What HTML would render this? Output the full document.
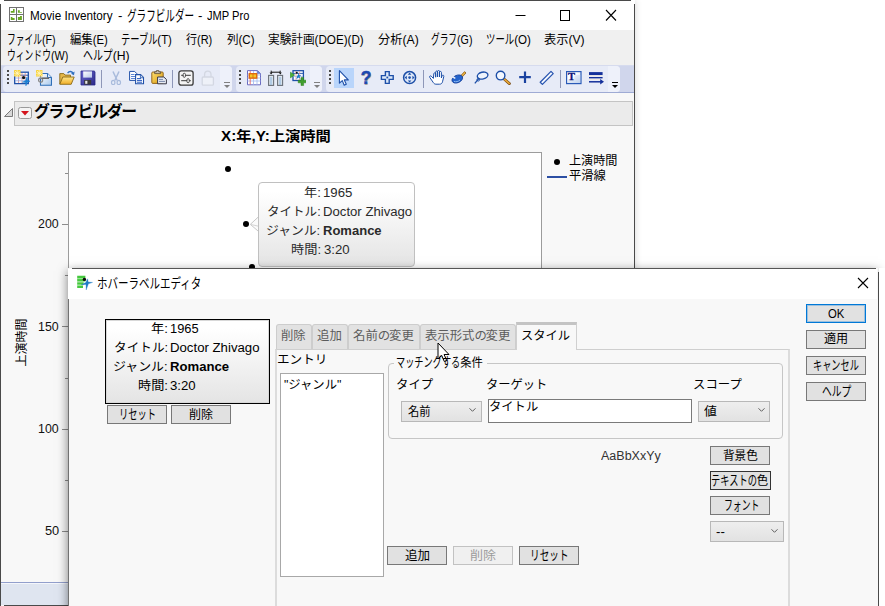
<!DOCTYPE html>
<html lang="ja">
<head>
<meta charset="utf-8">
<title>Movie Inventory - グラフビルダー - JMP Pro</title>
<style>
*{box-sizing:border-box;margin:0;padding:0}
html,body{width:885px;height:606px;overflow:hidden;background:#fff}
body{position:relative;font-family:"Liberation Sans","Noto Sans CJK JP",sans-serif;font-size:12px;color:#000}
.a{position:absolute;white-space:nowrap}
.t{position:absolute;white-space:pre;transform-origin:0 50%;line-height:20px;height:20px}
#main{left:0;top:0;width:635px;height:606px;background:#f8f8f8;overflow:hidden;box-shadow:0 0 7px rgba(0,0,0,.16)}
#titlebar{left:0;top:0;width:635px;height:30px;background:#fff}
#menubar{left:1px;top:30px;width:633px;height:35px;background:#f0f0f0}
#toolbar{left:1px;top:65px;width:633px;height:28px;background:#d0d6ec;border-bottom:1px solid #9fabd4;border-top:1px solid #d6dbee}
.tg{position:absolute;top:0px;height:26px;background:#e7ebf7;border-radius:4px}
.ov{position:absolute;top:0;right:0;width:12px;height:26px;background:#eef1fa;border-radius:0 4px 4px 0}
.grip{position:absolute;top:4px;width:2px;height:14px;background:repeating-linear-gradient(#4a4a4a 0 2px,transparent 2px 4px)}
.sep{position:absolute;top:4px;width:1px;height:18px;background:#8e97b8}
.ic{position:absolute;top:4px;width:16px;height:16px}
#olhead{left:14px;top:101px;width:619px;height:25px;background:#ebebeb;border:1px solid #c4c4c4}
#plot{left:68px;top:152px;width:474px;height:460px;background:#fff;border:1px solid #9c9c9c}
.tick{position:absolute;height:1px;background:#8c8c8c}
.pt{position:absolute;width:6px;height:6px;border-radius:50%;background:#000}
#tip{left:258px;top:182px;width:157px;height:85px;border:1px solid #c0c0c0;border-radius:4px;background:linear-gradient(#ffffff 10%,#e4e4e4)}
#dlg{left:68px;top:268px;width:810px;height:345px;background:#f8f8f8;box-shadow:0 3px 10px rgba(0,0,0,.5)}
#dtitle{left:0;top:1px;width:809px;height:30px;background:#fff}
.btn{position:absolute;height:19px;background:#e1e1e1;border:1px solid #787878;text-align:center;white-space:nowrap}
.tab{position:absolute;top:324px;height:25px;background:#e2e2e2;border:1px solid #cdcdcd;border-bottom:none;border-radius:3px 3px 0 0}
.sel{position:absolute;height:21px;background:linear-gradient(#eeeeee,#e2e2e2);border:1px solid #b8b8b8}
</style>
</head>
<body>

<div id="main" class="a">
<div id="titlebar" class="a"></div>
<div class="a" style="left:4px;top:0;width:627px;height:1px;background:#4a4a4a"></div>
<div class="a" style="left:0;top:4px;width:1px;height:602px;background:#4a4a4a"></div>
<div class="a" style="left:634px;top:4px;width:1px;height:602px;background:#4a4a4a"></div>
<!-- app icon -->
<svg class="a" style="left:9px;top:7px" width="16" height="16" viewBox="0 0 16 16">
<rect x="0.5" y="0.5" width="14" height="14" fill="#fff" stroke="#717171"/>
<path d="M7.5 0.5V14.5M0.5 7.5H14.5" stroke="#717171" fill="none"/>
<path d="M1.8 5.8V4h2.200V2h1.600v3.800zM8.900 5.800V3.200h1.900V5h2.100v.8zM1.800 12.900V10.100h1.600V11h2.200v1.900zM8.900 12.900V10h2.100V9.100h1.900v3.800z" fill="#6aa823"/>
</svg>
<!-- window controls -->
<svg class="a" style="left:505px;top:1px" width="129" height="29" viewBox="0 0 129 29">
<path d="M10.5 14.5h10" stroke="#000" stroke-width="1" fill="none"/>
<rect x="55.5" y="9.5" width="9" height="10" fill="none" stroke="#000" stroke-width="1"/>
<path d="M101 9l10 10.5M111 9l-10 10.5" stroke="#000" stroke-width="1.1" fill="none"/>
</svg>
<div id="menubar" class="a"></div>
<div id="toolbar" class="a">
  <div class="tg" style="left:2px;width:229px"><div class="ov"></div></div>
  <div class="tg" style="left:235px;width:86px"><div class="ov"></div></div>
  <div class="tg" style="left:325px;width:294px"><div class="ov"></div></div>
  <div class="grip" style="left:6px"></div>
  <div class="grip" style="left:238px"></div>
  <div class="grip" style="left:328px"></div>
  <div class="sep" style="left:100px"></div>
  <div class="sep" style="left:171px"></div>
  <div class="sep" style="left:422px"></div>
  <div class="sep" style="left:559px"></div>
  <div class="a" style="left:333px;top:2px;width:20px;height:20px;background:#b9d5fb"></div>
  <!-- overflow arrows -->
  <svg class="a" style="left:222px;top:15px" width="8" height="8" viewBox="0 0 8 8"><path d="M1 1.5h6" stroke="#808080"/><path d="M1 4h6l-3 3z" fill="#808080"/></svg>
  <svg class="a" style="left:312px;top:15px" width="8" height="8" viewBox="0 0 8 8"><path d="M1 1.5h6" stroke="#808080"/><path d="M1 4h6l-3 3z" fill="#808080"/></svg>
  <svg class="a" style="left:610px;top:15px" width="8" height="8" viewBox="0 0 8 8"><path d="M1 1.5h6" stroke="#000"/><path d="M1 4h6l-3 3z" fill="#000"/></svg>
  <svg class="a" style="left:13px;top:4px" width="16" height="16" viewBox="0 0 16 16"><rect x="0.7" y="2.2" width="13.6" height="11.4" fill="#fff" stroke="#1d4fa8" stroke-width="1.3"/><path d="M1 5.2h13" stroke="#1d4fa8" stroke-width="1"/><path d="M4.5 3v10M8 3v10M11.2 3v10" stroke="#e08a8a" stroke-width=".8"/><path d="M1 8h13M1 10.8h13" stroke="#8aa4e0" stroke-width=".8"/><rect x="0" y="0" width="6.5" height="6.5" fill="#f7d23c"/><path d="M3.2 0v6.5M0 3.2h6.5M.8 .8l5 5M5.8 .8l-5 5" stroke="#fff6c8" stroke-width=".8"/><circle cx="9.6" cy="7.6" r="1.6" fill="#111"/><path d="M13 6.800L13.700 10.500L16.300 11.100L13.500 12.300L11.900 16L11.500 12.600L8.200 12.200L11.600 10.600z" fill="#1a80d4" stroke="#1a80d4" stroke-width=".4"/></svg>
<svg class="a" style="left:35px;top:4px" width="16" height="16" viewBox="0 0 16 16"><defs><linearGradient id="g2" x1="0" y1="0" x2="1" y2="1"><stop offset="0" stop-color="#fff"/><stop offset="1" stop-color="#a8c8ec"/></linearGradient></defs><path d="M4.5 3.5h7l4 4v7.8h-11z" fill="url(#g2)" stroke="#2f6fb8" stroke-width="1.1"/><path d="M11.5 3.5v4h4" fill="#dbe9f8" stroke="#2f6fb8" stroke-width="1"/><rect x="0" y="0" width="6.5" height="6.5" fill="#f7d23c"/><path d="M3.2 0v6.5M0 3.2h6.5M.8 .8l5 5M5.8 .8l-5 5" stroke="#fff6c8" stroke-width=".8"/><circle cx="4.6" cy="10.2" r="2" fill="none" stroke="#8a8a8a" stroke-width="1.3"/><path d="M5.5 8.2h7.5" stroke="#6a6a6a" stroke-width="1.6"/><path d="M4.4 6v2.5" stroke="#9a9a9a" stroke-width="1"/></svg>
<svg class="a" style="left:58px;top:4px" width="16" height="16" viewBox="0 0 16 16"><defs><linearGradient id="g3" x1="0" y1="0" x2="0" y2="1"><stop offset="0" stop-color="#ffe68a"/><stop offset="1" stop-color="#f0ae28"/></linearGradient></defs><path d="M.8 14V3.6h4l1.3 1.5h5.4V7" fill="#e6b84a" stroke="#8a6a18" stroke-width=".9"/><path d="M.8 14.3L3.8 7h11.4l-3 7.3z" fill="url(#g3)" stroke="#8a6a18" stroke-width=".9"/><path d="M8.6 3.2c1.6-2.4 4.6-2.2 5.4.2" fill="none" stroke="#2f6fc0" stroke-width="1.4"/><path d="M15.6 1.6l-.6 3.6-3-1.4z" fill="#2f6fc0"/></svg>
<svg class="a" style="left:79px;top:4px" width="16" height="16" viewBox="0 0 16 16"><defs><linearGradient id="g4" x1="0" y1="0" x2="1" y2="1"><stop offset="0" stop-color="#6a68d0"/><stop offset="1" stop-color="#2a2888"/></linearGradient><linearGradient id="g4b" x1="0" y1="0" x2="1" y2="1"><stop offset="0" stop-color="#fff"/><stop offset="1" stop-color="#b8c8e8"/></linearGradient></defs><path d="M1 1h13.2l.8 .8V15H1z" fill="url(#g4)" stroke="#2a2888" stroke-width=".8"/><rect x="3.2" y="1.4" width="8.8" height="6.2" fill="url(#g4b)"/><rect x="4.2" y="10" width="7" height="4.6" fill="#3a3a3a"/><rect x="5.2" y="10.8" width="2.2" height="3" fill="#e8e8e8"/></svg>
<svg class="a" style="left:107px;top:4px" width="16" height="16" viewBox="0 0 16 16"><path d="M5 1.5l4.2 9M11 1.5l-4.2 9" stroke="#a9bbdc" stroke-width="1.5" fill="none"/><ellipse cx="5.2" cy="12.4" rx="1.7" ry="2.1" fill="#e6ecf8" stroke="#a9bbdc" stroke-width="1.2"/><ellipse cx="10.8" cy="12.4" rx="1.7" ry="2.1" fill="#e6ecf8" stroke="#a9bbdc" stroke-width="1.2"/></svg>
<svg class="a" style="left:128px;top:4px" width="16" height="16" viewBox="0 0 16 16"><path d="M.6 1.4h5l2.4 2.4v6.6H.6z" fill="#fff" stroke="#2050a8" stroke-width="1"/><path d="M2 4.5h3.5M2 6.5h4.5M2 8.5h4.5" stroke="#4a78d0" stroke-width=".9"/><path d="M6.6 4.6h5l2.9 2.9v6.3H6.6z" fill="#fff" stroke="#2050a8" stroke-width="1.1"/><path d="M11.4 4.8v3h3" fill="#c8d8f0" stroke="#2050a8" stroke-width=".8"/><path d="M8 8.6h4M8 10.4h5M8 12.2h5" stroke="#2458c0" stroke-width="1"/></svg>
<svg class="a" style="left:150px;top:4px" width="16" height="16" viewBox="0 0 16 16"><defs><linearGradient id="g7" x1="0" y1="0" x2="1" y2="1"><stop offset="0" stop-color="#ffe070"/><stop offset="1" stop-color="#d89a10"/></linearGradient></defs><rect x=".8" y="2" width="11.4" height="11.4" rx="1" fill="url(#g7)" stroke="#8a5a10" stroke-width=".9"/><path d="M3.6 3.6V1.8h1.8V.6h2.4v1.2h1.8v1.8z" fill="#c8c0b0" stroke="#5a4a30" stroke-width=".8"/><path d="M6.6 7h6.2l2.6 2.4v4.4H6.6z" fill="#e8ecf4" stroke="#3a3a48" stroke-width="1"/><path d="M8 9.4h4M8 11.4h6" stroke="#6a7aa0" stroke-width=".9"/></svg>
<svg class="a" style="left:177px;top:4px" width="16" height="16" viewBox="0 0 16 16"><rect x=".9" y=".9" width="14.2" height="14.2" rx="2.2" fill="#f4f4f4" stroke="#3a3a3a" stroke-width="1.3"/><path d="M3.2 5.3h9.6M3.2 10.7h9.6" stroke="#3a3a3a" stroke-width="1"/><rect x="5.2" y="3.3" width="2.2" height="4" rx="1" fill="#fff" stroke="#3a3a3a" stroke-width=".9"/><rect x="9" y="8.7" width="2.2" height="4" rx="1" fill="#fff" stroke="#3a3a3a" stroke-width=".9"/></svg>
<svg class="a" style="left:199px;top:4px" width="16" height="16" viewBox="0 0 16 16"><path d="M4.6 7V4.4a3.2 3.2 0 0 1 6.4 0V7" fill="none" stroke="#d3d7e2" stroke-width="1.3"/><rect x="2.2" y="7" width="11.2" height="8.2" rx="1" fill="#eef1f8" stroke="#d3d7e2" stroke-width="1.3"/></svg>
<svg class="a" style="left:245px;top:4px" width="16" height="16" viewBox="0 0 16 16"><path d="M1.5 .6h10l3 3v11.2h-13z" fill="#fff" stroke="#6a6ac0" stroke-width="1"/><path d="M1.5 5h13M1.5 8h13M1.5 11h13M7.5 1v13.5M11 1v13.5" stroke="#a8c0f0" stroke-width=".9"/><path d="M4.2 1v13.5" stroke="#e86060" stroke-width=".9"/><rect x="3.3" y="3.700" width="7.400" height="4.400" fill="#f4c828" stroke="#e06a10" stroke-width="1.400"/><path d="M7 4v4" stroke="#e06a10" stroke-width=".9"/><path d="M11.5 .8v2.8h2.8" fill="#5a8ae0" stroke="#6a6ac0" stroke-width=".6"/></svg>
<svg class="a" style="left:267px;top:4px" width="16" height="16" viewBox="0 0 16 16"><rect x=".6" y="5.4" width="5" height="10" fill="#dfe7ef" stroke="#6a7078" stroke-width="1.1"/><rect x="9.6" y="5.4" width="5" height="10" fill="#dfe7ef" stroke="#6a7078" stroke-width="1.1"/><path d="M2 8h2.2M2 10h2.2M2 12h2.2M2 14h2.2M11 8h2.2M11 10h2.2M11 12h2.2M11 14h2.2" stroke="#7aa8d8" stroke-width=".9"/><path d="M3 2.2h9.4" stroke="#111" stroke-width="1"/><path d="M1.6 2.4h3l-1.5 2.2zM10.8 2.4h3l-1.5 2.2z" fill="#111"/><path d="M3.2 .6v2M12.2 .6v2" stroke="#111" stroke-width=".9"/></svg>
<svg class="a" style="left:289px;top:4px" width="16" height="16" viewBox="0 0 16 16"><rect x="3" y=".7" width="10.4" height="9.8" fill="#fff" stroke="#1d4fa8" stroke-width="1.3"/><path d="M3 3.4h10" stroke="#1d4fa8" stroke-width=".9"/><path d="M6 1v9M9.6 1v9" stroke="#e89090" stroke-width=".7"/><path d="M3 6.4h10" stroke="#90a8e0" stroke-width=".7"/><path d="M8.6 3.2l.5 2 2.4-.4-2 1.6 1 2.4-2-1.4-2.2 1.8.8-2.6z" fill="#1878c8"/><circle cx="6.8" cy="2.8" r="1" fill="#111"/><path d="M.4 2.2L4.6 5 .4 7.8z" fill="#4db03c" stroke="#2f8a24" stroke-width=".6"/><path d="M11 7.4h2.6v2.8h2.8v2.6h-2.8v2.8H11v-2.8H8.2v-2.6H11z" fill="#3e9e2c" stroke="#2a7a1c" stroke-width=".5"/></svg>
<svg class="a" style="left:335px;top:4px" width="16" height="16" viewBox="0 0 16 16"><path d="M3.4 .6v12.6l2.9-2.6 1.9 4.6 2.1-.9-2-4.4h4z" fill="#fff" stroke="#1d4fa8" stroke-width="1.1" stroke-linejoin="round"/></svg>
<svg class="a" style="left:357px;top:4px" width="16" height="16" viewBox="0 0 16 16"><text x="8.800" y="14.600" font-family="Liberation Sans,sans-serif" font-weight="700" font-size="17.500" text-anchor="middle" fill="#dcc098">?</text><text x="8" y="14" font-family="Liberation Sans,sans-serif" font-weight="700" font-size="17.500" text-anchor="middle" fill="#1c48b0" stroke="#1c48b0" stroke-width=".5">?</text></svg>
<svg class="a" style="left:379px;top:4px" width="16" height="16" viewBox="0 0 16 16"><path d="M5.4 1.6h3.8v4h4v3.8h-4v4H5.4v-4h-4V5.6h4z" fill="#dce8f8" stroke="#1d4fa8" stroke-width="1.4"/><rect x="6.4" y="6.6" width="1.8" height="1.8" fill="#1d4fa8"/></svg>
<svg class="a" style="left:401px;top:4px" width="16" height="16" viewBox="0 0 16 16"><circle cx="7.6" cy="7.6" r="6" fill="#dfe8f8" stroke="#1d4fa8" stroke-width="1.5"/><circle cx="7.6" cy="7.6" r="1.3" fill="#1d4fa8"/><path d="M7.6 2.6l1.8 2.2H5.8zM7.6 12.6l1.8-2.2H5.8zM2.6 7.6l2.2-1.8v3.6zM12.6 7.6l-2.2-1.8v3.6z" fill="#1d4fa8"/></svg>
<svg class="a" style="left:428px;top:4px" width="16" height="16" viewBox="0 0 16 16"><path d="M4.4 8.4L2.2 6.2c-.9-.9-2.2.2-1.4 1.3l3.6 5.2c.6.9 1.4 1.5 2.6 1.5h3.600c1.600 0 2.600-1 2.900-2.400l1.300-5.400c.3-1.300-1.400-1.800-1.800-.5L12.400 8V2.400c0-1.300-1.900-1.300-1.900 0V7 1.400c0-1.300-1.900-1.300-1.900 0V7 2c0-1.300-1.900-1.300-1.900 0v5.200V3.800c0-1.300-1.900-1.300-1.900 0z" fill="#fff" stroke="#1d4fa8" stroke-width="1" stroke-linejoin="round"/></svg>
<svg class="a" style="left:450px;top:4px" width="16" height="16" viewBox="0 0 16 16"><path d="M9 6.400L13.600 1.600l1.400 1.400L10.400 7.800z" fill="#e8b040" stroke="#8a5a18" stroke-width=".8"/><ellipse cx="6.300" cy="9" rx="5.600" ry="3.700" transform="rotate(-24 6.3 9)" fill="#2464cc" stroke="#17409a" stroke-width=".8"/><path d="M1.200 7.200c1 -.2 2.200 .2 3 1.200" stroke="#e7ebf7" stroke-width="1.600" fill="none"/><path d="M3 11.400c1.800 .8 4.400 .2 6 -1.400" stroke="#8ab8f0" stroke-width="1" fill="none"/></svg>
<svg class="a" style="left:473px;top:4px" width="16" height="16" viewBox="0 0 16 16"><ellipse cx="8.600" cy="5.600" rx="5.400" ry="3.400" transform="rotate(-14 8.6 5.6)" fill="#eef3fc" stroke="#1d4fa8" stroke-width="1.400"/><path d="M5.200 8.200L.8 13.400" stroke="#1d4fa8" stroke-width="1.300"/><circle cx="4.200" cy="9.800" r="1.300" fill="none" stroke="#1d4fa8" stroke-width=".9"/></svg>
<svg class="a" style="left:494px;top:4px" width="16" height="16" viewBox="0 0 16 16"><path d="M8.800 8.800l5.600 4.800" stroke="#7a4a10" stroke-width="2.800" stroke-linecap="round"/><path d="M9.200 9.100l5 4.300" stroke="#e8a838" stroke-width="1.500" stroke-linecap="round"/><circle cx="5.600" cy="5.600" r="4.300" fill="#f4f8ff" stroke="#1d4fa8" stroke-width="1.400"/></svg>
<svg class="a" style="left:516px;top:4px" width="16" height="16" viewBox="0 0 16 16"><path d="M8 1.400v11.600M2.200 7.200h11.600" stroke="#1a42a0" stroke-width="2.200" fill="none"/></svg>
<svg class="a" style="left:538px;top:4px" width="16" height="16" viewBox="0 0 16 16"><path d="M1.200 12.200L12 1.400l2.200 2.200L3.400 14.400z" fill="#f4f8ff" stroke="#2a56b0" stroke-width="1.300" stroke-linejoin="round"/></svg>
<svg class="a" style="left:565px;top:4px" width="16" height="16" viewBox="0 0 16 16"><defs><linearGradient id="g21" x1="0" y1="0" x2="1" y2="1"><stop offset=".4" stop-color="#fff"/><stop offset="1" stop-color="#b8cdee"/></linearGradient></defs><rect x=".600" y="1.600" width="14.400" height="12" fill="url(#g21)" stroke="#2a5ab8" stroke-width="1.200"/><path d="M8.500 6h6M8.500 8h6M2 10h12.500M2 12h12.500" stroke="#c4d4ee" stroke-width=".8"/><text x="5.600" y="9.600" font-family="Liberation Serif,serif" font-weight="700" font-size="10.500" text-anchor="middle" fill="#0c1478" stroke="#0c1478" stroke-width=".3">T</text></svg>
<svg class="a" style="left:587px;top:4px" width="16" height="16" viewBox="0 0 16 16"><path d="M1 3.600h13.600" stroke="#14309a" stroke-width="3"/><path d="M1 7.700h13.600" stroke="#14309a" stroke-width="1.400"/><path d="M1 11.800h12" stroke="#14309a" stroke-width="1.500"/><path d="M12.200 9l3.800 2.800-3.800 2.800z" fill="#14309a"/><path d="M1 5.700h13.600M1 9.400h11" stroke="#f4ead6" stroke-width=".7"/></svg>
</div>
<div id="olhead" class="a"></div>
<!-- disclosure triangle + red triangle button -->
<svg class="a" style="left:3px;top:106px" width="30" height="14" viewBox="0 0 30 14">
<path d="M1.5 10.5L9.5 2.5V10.5z" fill="#d8d8d8" stroke="#7a7a7a"/>
<rect x="15.5" y="1.5" width="13" height="11" rx="2" fill="#f4f4f4" stroke="#9a9a9a"/>
<path d="M18 5h8l-4 4.5z" fill="#d4141c"/>
</svg>
<div id="plot" class="a"></div>
<!-- ticks -->
<div class="tick" style="left:62px;top:224px;width:6px"></div>
<div class="tick" style="left:62px;top:326px;width:6px"></div>
<div class="tick" style="left:62px;top:429px;width:6px"></div>
<div class="tick" style="left:62px;top:531px;width:6px"></div>
<div class="tick" style="left:65px;top:173px;width:3px"></div>
<div class="tick" style="left:65px;top:275px;width:3px"></div>
<div class="tick" style="left:65px;top:378px;width:3px"></div>
<div class="tick" style="left:65px;top:480px;width:3px"></div>
<!-- y axis title -->
<div class="a" style="left:21px;top:343.300px;width:0;height:0"><span id="ytitle" style="position:absolute;white-space:nowrap;font-size:12px;line-height:16px;left:-23.5px;top:-8px;width:47px;text-align:center;transform:rotate(-90deg)">上演時間</span></div>
<!-- points -->
<div class="pt" style="left:224.5px;top:166px"></div>
<div class="pt" style="left:243px;top:221px"></div>
<div class="pt" style="left:249.200px;top:263.800px"></div>
<!-- legend -->
<div class="pt" style="left:554px;top:158.5px"></div>
<div class="a" style="left:547px;top:176px;width:20px;height:2px;background:#2c4fa3"></div>
<!-- tooltip -->
<svg class="a" style="left:248px;top:214px" width="12" height="20" viewBox="0 0 12 20"><path d="M11 2.300L2.300 10.400L11 17.800" fill="#fbfbfb" stroke="#c9c9c9"/><path d="M2.300 10.400L11 12.300" fill="none" stroke="#d4d4d4"/></svg>
<div id="tip" class="a"></div>

<span class="t" id="t0" style="left:29.8px;top:5.5px;font-size:12px;transform:scaleX(0.975);">Movie Inventory</span>
<span class="t" id="t1" style="left:118.2px;top:5.5px;font-size:12px;transform:scaleX(1.100);">-</span>
<span class="t" id="t2" style="left:126.6px;top:6.2px;font-size:15px;transform:scaleX(0.968);"><span style="display:inline-block;font-size:1em;transform:scaleX(0.66);transform-origin:0 50%;margin-right:-2.38em">グラフビルダー</span></span>
<span class="t" id="t3" style="left:197.8px;top:5.5px;font-size:12px;transform:scaleX(1.100);">-</span>
<span class="t" id="t4" style="left:206.6px;top:5.5px;font-size:12px;transform:scaleX(0.924);">JMP Pro</span>
<span class="t" id="t5" style="left:7.4px;top:30.0px;font-size:12px;transform:scaleX(0.894);"><span style="display:inline-block;font-size:1.1em;transform:scaleX(0.74);transform-origin:0 50%;margin-right:-1.04em">ファイル</span>(F)</span>
<span class="t" id="t6" style="left:70.4px;top:30.0px;font-size:12px;transform:scaleX(0.945);">編集(E)</span>
<span class="t" id="t7" style="left:121.0px;top:30.0px;font-size:12px;transform:scaleX(0.950);"><span style="display:inline-block;font-size:1.1em;transform:scaleX(0.74);transform-origin:0 50%;margin-right:-1.04em">テーブル</span>(T)</span>
<span class="t" id="t8" style="left:186.1px;top:30.0px;font-size:12px;transform:scaleX(0.915);">行(R)</span>
<span class="t" id="t9" style="left:227.3px;top:30.0px;font-size:12px;transform:scaleX(0.961);">列(C)</span>
<span class="t" id="t10" style="left:268.3px;top:30.0px;font-size:12px;transform:scaleX(0.970);">実験計画(DOE)(D)</span>
<span class="t" id="t11" style="left:378.0px;top:30.0px;font-size:12px;transform:scaleX(1.018);">分析(A)</span>
<span class="t" id="t12" style="left:431.4px;top:30.0px;font-size:12px;transform:scaleX(0.889);"><span style="display:inline-block;font-size:1.1em;transform:scaleX(0.74);transform-origin:0 50%;margin-right:-0.78em">グラフ</span>(G)</span>
<span class="t" id="t13" style="left:486.0px;top:30.0px;font-size:12px;transform:scaleX(0.964);"><span style="display:inline-block;font-size:1.1em;transform:scaleX(0.74);transform-origin:0 50%;margin-right:-0.78em">ツール</span>(O)</span>
<span class="t" id="t14" style="left:543.7px;top:30.0px;font-size:12px;transform:scaleX(1.016);">表示(V)</span>
<span class="t" id="t15" style="left:7.4px;top:46.0px;font-size:12px;transform:scaleX(0.900);"><span style="display:inline-block;font-size:1.1em;transform:scaleX(0.74);transform-origin:0 50%;margin-right:-1.30em">ウィンドウ</span>(W)</span>
<span class="t" id="t16" style="left:82.8px;top:46.0px;font-size:12px;transform:scaleX(1.016);"><span style="display:inline-block;font-size:1.1em;transform:scaleX(0.74);transform-origin:0 50%;margin-right:-0.78em">ヘルプ</span>(H)</span>
<span class="t" id="t17" style="left:33.8px;top:101.5px;font-size:16px;font-weight:700;transform:scaleX(0.989);"><span style="letter-spacing:-0.08em">グラフビルダー</span></span>
<span class="t" id="t18" style="left:221.3px;top:126.0px;font-size:14px;font-weight:700;transform:scaleX(1.089);">X:年,Y:上演時間</span>
<span class="t" id="t19" style="left:38.1px;top:213.5px;font-size:12px;color:#111;transform:scaleX(1.032);">200</span>
<span class="t" id="t20" style="left:38.1px;top:316.5px;font-size:12px;color:#111;transform:scaleX(1.032);">150</span>
<span class="t" id="t21" style="left:38.1px;top:418.5px;font-size:12px;color:#111;transform:scaleX(1.032);">100</span>
<span class="t" id="t22" style="left:44.8px;top:521.0px;font-size:12px;color:#111;transform:scaleX(1.067);">50</span>
<span class="t" id="t23" style="left:569.3px;top:150.5px;font-size:12px;transform:scaleX(1.009);">上演時間</span>
<span class="t" id="t24" style="left:569.3px;top:165.5px;font-size:12px;transform:scaleX(1.026);">平滑線</span>
<span class="t" id="t25" style="left:303.5px;top:183.3px;font-size:12px;color:#2a2a2a;transform:scaleX(1.100);">年:</span>
<span class="t" id="t26" style="left:323.1px;top:183.3px;font-size:12px;color:#2a2a2a;transform:scaleX(1.100);">1965</span>
<span class="t" id="t27" style="left:267.0px;top:202.3px;font-size:12px;color:#2a2a2a;transform:scaleX(1.045);">タイトル:</span>
<span class="t" id="t28" style="left:322.9px;top:202.3px;font-size:12px;color:#2a2a2a;transform:scaleX(1.096);">Doctor Zhivago</span>
<span class="t" id="t29" style="left:265.9px;top:221.3px;font-size:12px;color:#2a2a2a;transform:scaleX(1.067);">ジャンル:</span>
<span class="t" id="t30" style="left:322.9px;top:221.3px;font-size:12px;font-weight:700;color:#2a2a2a;transform:scaleX(1.085);">Romance</span>
<span class="t" id="t31" style="left:290.6px;top:240.2px;font-size:12px;color:#2a2a2a;transform:scaleX(1.100);">時間:</span>
<span class="t" id="t32" style="left:323.8px;top:240.2px;font-size:12px;color:#2a2a2a;transform:scaleX(1.100);">3:20</span>
<div class="a" style="left:1px;top:582px;width:633px;height:23px;background:#dfe5f0;border-top:1px solid #929fcc;box-shadow:inset 0 1px 0 #f4f6fb"></div>
<div class="a" style="left:4px;top:605px;width:627px;height:1px;background:#4a4a4a"></div>
</div>

<div id="dlg" class="a"></div>
<div class="a" style="left:68px;top:271px;width:1px;height:335px;background:#727272"></div>
<div class="a" style="left:72px;top:268px;width:804px;height:1px;background:#555"></div>
<div class="a" style="left:68px;top:269px;width:809px;height:30px;background:#fff"></div>
<div class="a" style="left:878px;top:272px;width:1px;height:334px;background:#4a4a4a"></div>
<div class="a" style="left:879px;top:268px;width:6px;height:338px;background:#fff"></div>
<!-- dialog icon -->
<svg class="a" style="left:77px;top:275px" width="17" height="16" viewBox="0 0 17 16">
<path d="M0.200 .8h8.200v2.600h-8.200zM0.200 4h8.200v2.600h-8.200zM0.200 7.200h6.400v2.600h-6.400zM0.200 10.400h5.800v2.600h-5.800z" fill="#45c83e"/>
<path d="M0.200 3.700h8.200M0.200 6.900h7M0.200 10.100h6" stroke="#8fe486" stroke-width=".7"/>
<circle cx="7.400" cy="4.400" r="1.700" fill="#0a0a0a"/>
<path d="M10.600 3.800L11.200 7L15.600 7.400L11.400 8.800L9.200 15L9 9.400L4.200 9.700L8.800 7.600z" fill="#1d7cc6" stroke="#1d7cc6" stroke-width=".3"/>
</svg>
<!-- close -->
<svg class="a" style="left:857px;top:277px" width="12" height="12" viewBox="0 0 12 12"><path d="M1 1l10 10M11 1L1 11" stroke="#000" stroke-width="1.1" fill="none"/></svg>
<!-- preview box -->
<div class="a" style="left:105px;top:319px;width:165px;height:85px;border:1px solid #000;background:linear-gradient(#fff 10%,#e4e4e4);box-shadow:inset 0 0 0 1px #d8d8d8"></div>
<div class="btn" style="left:107px;top:405px;width:60px"></div>
<div class="btn" style="left:171px;top:405px;width:60px"></div>
<!-- tab panel -->
<div class="a" style="left:275px;top:349px;width:515px;height:270px;border:2px solid #dcdcdc;border-top:1px solid #cfcfcf;background:#f8f8f8"></div>
<div class="tab" style="left:276px;width:36px"></div>
<div class="tab" style="left:312px;width:36px"></div>
<div class="tab" style="left:348px;width:72px"></div>
<div class="tab" style="left:420px;width:95.5px"></div>
<div class="a" style="left:515.5px;top:322px;width:61px;height:28px;background:#f8f8f8;border:1px solid #d0d0d0;border-top:3px solid #c4c4c4;border-bottom:none"></div>
<!-- entries list -->
<div class="a" style="left:280px;top:373px;width:104px;height:204px;background:#fff;border:1px solid #a8a8a8"></div>
<!-- group box -->
<div class="a" style="left:388px;top:363px;width:395px;height:76px;border:1px solid #c6c6c6;border-radius:4px"></div>
<div class="a" style="left:394px;top:361px;width:92.5px;height:5px;background:#f8f8f8"></div>
<div class="sel" style="left:401px;top:401px;width:81px"></div>
<svg class="a" style="left:468px;top:407px" width="9" height="6" viewBox="0 0 9 6"><path d="M1.500 1.300l3 3L7.500 1.300" stroke="#5e5e5e" stroke-width="1" fill="none"/></svg>
<div class="a" style="left:488px;top:399px;width:204px;height:24px;background:#fff;border:1px solid #7a7a7a"></div>
<div class="sel" style="left:698px;top:401px;width:72px"></div>
<svg class="a" style="left:756.5px;top:407px" width="9" height="6" viewBox="0 0 9 6"><path d="M1.500 1.300l3 3L7.500 1.300" stroke="#5e5e5e" stroke-width="1" fill="none"/></svg>
<!-- style buttons -->
<div class="btn" style="left:710px;top:446px;width:60px"></div>
<div class="btn" style="left:710px;top:471px;width:61px;border-color:#333"></div>
<div class="btn" style="left:710px;top:496px;width:60px"></div>
<div class="sel" style="left:710px;top:521px;width:74px;height:21px"></div>
<svg class="a" style="left:770px;top:527.5px" width="9" height="6" viewBox="0 0 9 6"><path d="M1.500 1.300l3 3L7.500 1.300" stroke="#5e5e5e" stroke-width="1" fill="none"/></svg>
<div class="btn" style="left:387px;top:546px;width:60px"></div>
<div class="btn" style="left:453px;top:546px;width:60px;background:#f0f0f0;border-color:#c2c2c2"></div>
<div class="btn" style="left:519px;top:546px;width:60px"></div>
<!-- right buttons -->
<div class="btn" style="left:806px;top:304px;width:60px;height:19px;border:1px solid #0078d7;box-shadow:inset 0 0 0 1px rgba(0,120,215,.3)"></div>
<div class="btn" style="left:806px;top:330px;width:60px;height:19px"></div>
<div class="btn" style="left:806px;top:356px;width:60px;height:19px"></div>
<div class="btn" style="left:806px;top:382px;width:60px;height:19px"></div>
<!-- mouse cursor -->
<svg class="a" style="left:437px;top:342px" width="14" height="21" viewBox="0 0 14 21"><path d="M1 1v16l3.7-3.6l2.6 6.1l2.4-1l-2.6-6H12z" fill="#fff" stroke="#000" stroke-width="1"/></svg>

<span class="t" id="t33" style="left:97.1px;top:273.2px;font-size:14px;"><span style="display:inline-block;font-size:1em;transform:scaleX(0.75);transform-origin:0 50%;margin-right:-2.50em">ホバーラベルエディタ</span></span>
<span class="t" id="t34" style="left:150.7px;top:318.7px;font-size:12px;transform:scaleX(1.100);">年:</span>
<span class="t" id="t35" style="left:169.8px;top:318.7px;font-size:12px;transform:scaleX(1.072);">1965</span>
<span class="t" id="t36" style="left:114.0px;top:337.6px;font-size:12px;transform:scaleX(1.053);">タイトル:</span>
<span class="t" id="t37" style="left:169.8px;top:337.6px;font-size:12px;transform:scaleX(1.100);">Doctor Zhivago</span>
<span class="t" id="t38" style="left:113.0px;top:356.5px;font-size:12px;transform:scaleX(1.075);">ジャンル:</span>
<span class="t" id="t39" style="left:169.8px;top:356.5px;font-size:12px;font-weight:700;transform:scaleX(1.094);">Romance</span>
<span class="t" id="t40" style="left:138.2px;top:375.6px;font-size:12px;transform:scaleX(1.096);">時間:</span>
<span class="t" id="t41" style="left:170.1px;top:375.6px;font-size:12px;transform:scaleX(1.100);">3:20</span>
<span class="t" id="t42" style="left:118.9px;top:405.2px;font-size:12px;transform:scaleX(0.951);"><span style="display:inline-block;font-size:1.1em;transform:scaleX(0.74);transform-origin:0 50%;margin-right:-1.04em">リセット</span></span>
<span class="t" id="t43" style="left:189.1px;top:405.0px;font-size:12px;">削除</span>
<span class="t" id="t44" style="left:281.1px;top:326.0px;font-size:12px;color:#5c5c5c;transform:scaleX(1.027);">削除</span>
<span class="t" id="t45" style="left:317.1px;top:326.0px;font-size:12px;color:#5c5c5c;transform:scaleX(1.036);">追加</span>
<span class="t" id="t46" style="left:353.1px;top:326.0px;font-size:12px;color:#5c5c5c;transform:scaleX(1.035);">名前<span style="letter-spacing:-0.1em">の</span>変更</span>
<span class="t" id="t47" style="left:424.6px;top:326.0px;font-size:12px;color:#5c5c5c;transform:scaleX(1.030);">表示形式<span style="letter-spacing:-0.1em">の</span>変更</span>
<span class="t" id="t48" style="left:520.6px;top:326.0px;font-size:12px;transform:scaleX(1.024);">スタイル</span>
<span class="t" id="t49" style="left:277.0px;top:349.7px;font-size:12px;transform:scaleX(1.050);">エントリ</span>
<span class="t" id="t50" style="left:283.9px;top:374.5px;font-size:12px;transform:scaleX(1.025);">"ジャンル"</span>
<span class="t" id="t51" style="left:395.9px;top:352.5px;font-size:12px;transform:scaleX(0.941);"><span style="display:inline-block;font-size:1.1em;transform:scaleX(0.74);transform-origin:0 50%;margin-right:-1.82em">マッチングする</span>条件</span>
<span class="t" id="t52" style="left:396.3px;top:375.2px;font-size:12px;transform:scaleX(1.032);">タイプ</span>
<span class="t" id="t53" style="left:407.7px;top:401.6px;font-size:12px;transform:scaleX(0.941);">名前</span>
<span class="t" id="t54" style="left:485.7px;top:375.2px;font-size:12px;transform:scaleX(1.023);">ターゲット</span>
<span class="t" id="t55" style="left:489.1px;top:396.6px;font-size:12px;transform:scaleX(1.026);">タイトル</span>
<span class="t" id="t56" style="left:693.1px;top:375.2px;font-size:12px;transform:scaleX(1.035);">スコープ</span>
<span class="t" id="t57" style="left:704.3px;top:402.0px;font-size:12px;transform:scaleX(1.073);">値</span>
<span class="t" id="t58" style="left:601.3px;top:445.7px;font-size:12px;color:#333;transform:scaleX(1.042);">AaBbXxYy</span>
<span class="t" id="t59" style="left:722.6px;top:446.2px;font-size:12px;transform:scaleX(0.966);">背景色</span>
<span class="t" id="t60" style="left:711.4px;top:471.2px;font-size:12px;transform:scaleX(0.946);"><span style="display:inline-block;font-size:1.1em;transform:scaleX(0.74);transform-origin:0 50%;margin-right:-1.30em">テキストの</span>色</span>
<span class="t" id="t61" style="left:723.8px;top:495.8px;font-size:12px;transform:scaleX(0.908);"><span style="display:inline-block;font-size:1.1em;transform:scaleX(0.74);transform-origin:0 50%;margin-right:-1.04em">フォント</span></span>
<span class="t" id="t62" style="left:715.7px;top:521.8px;font-size:12px;transform:scaleX(1.100);">--</span>
<span class="t" id="t63" style="left:404.5px;top:546.2px;font-size:12px;transform:scaleX(1.045);">追加</span>
<span class="t" id="t64" style="left:469.7px;top:546.2px;font-size:12px;color:#9c9c9c;transform:scaleX(1.086);">削除</span>
<span class="t" id="t65" style="left:529.7px;top:546.2px;font-size:12px;transform:scaleX(0.989);"><span style="display:inline-block;font-size:1.1em;transform:scaleX(0.74);transform-origin:0 50%;margin-right:-1.04em">リセット</span></span>
<span class="t" id="t66" style="left:827.6px;top:303.5px;font-size:12px;transform:scaleX(0.944);">OK</span>
<span class="t" id="t67" style="left:823.9px;top:329.4px;font-size:12px;transform:scaleX(1.009);">適用</span>
<span class="t" id="t68" style="left:812.8px;top:355.8px;font-size:12px;transform:scaleX(0.940);"><span style="display:inline-block;font-size:1.1em;transform:scaleX(0.74);transform-origin:0 50%;margin-right:-1.30em">キャンセル</span></span>
<span class="t" id="t69" style="left:821.9px;top:382.0px;font-size:12px;"><span style="display:inline-block;font-size:1.1em;transform:scaleX(0.74);transform-origin:0 50%;margin-right:-0.78em">ヘルプ</span></span>

</body>
</html>
